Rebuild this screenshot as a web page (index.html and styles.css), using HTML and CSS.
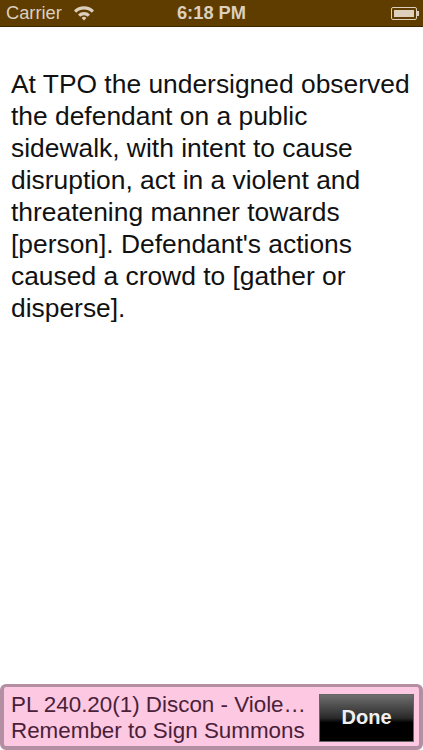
FILE: index.html
```html
<!DOCTYPE html>
<html lang="en">
<head>
  <meta charset="UTF-8">
  <title>Summons Narrative</title>
  <link rel="stylesheet" href="styles.css">
</head>
<body>

<div class="screen">
  <!-- Status bar -->
  <div class="status-bar">
    <div class="status-left">
      <span>Carrier</span>
      <svg class="wifi" width="22" height="16" viewBox="0 0 22 16">
        <path d="M1 5.5 A14 14 0 0 1 21 5.5 L18.8 7.8 A11 11 0 0 0 3.2 7.8 Z" fill="#dcd0bc"/>
        <path d="M5 9.5 A8.5 8.5 0 0 1 17 9.5 L14.8 11.7 A5.5 5.5 0 0 0 7.2 11.7 Z" fill="#dcd0bc"/>
        <path d="M8.6 13 A3.4 3.4 0 0 1 13.4 13 L11 15.6 Z" fill="#dcd0bc"/>
      </svg>
    </div>
    <div class="status-time">6:18 PM</div>
    <div class="battery">
      <div class="battery-body"><div class="battery-fill"></div></div>
      <div class="battery-tip"></div>
    </div>
  </div>

  <!-- Narrative -->
  <div class="content">
    <p>At TPO the undersigned observed the defendant on a public sidewalk, with intent to cause disruption, act in a violent and threatening manner towards [person]. Defendant's actions caused a crowd to [gather or disperse].</p>
  </div>

  <!-- Bottom bar -->
  <div class="footer">
    <div class="footer-text">
      <div class="footer-line">PL 240.20(1) Discon - Viole…</div>
      <div class="footer-line">Remember to Sign Summons</div>
    </div>
    <button class="done-btn">Done</button>
  </div>
</div>

</body>
</html>
```

FILE: styles.css
```css
* {
  box-sizing: border-box;
}

body {
  margin: 0;
  background: #fff;
  font-family: "Liberation Sans", Arial, sans-serif;
}

.screen {
  display: flex;
  flex-direction: column;
  width: 423px;
  height: 750px;
  overflow: hidden;
}

.status-bar {
  display: grid;
  grid-template-columns: 1fr auto 1fr;
  align-items: center;
  height: 27px;
  padding: 0 4px;
  background: #5f3c00;
  border-bottom: 1px solid #3f2800;
  color: #dcd0bc;
  font-size: 18.3px;
}

.status-left {
  display: flex;
  align-items: center;
  gap: 11px;
  padding-left: 2px;
}

.status-time {
  font-weight: bold;
  font-size: 18.3px;
}

.battery {
  display: flex;
  align-items: center;
  justify-self: end;
}

.battery-body {
  width: 26px;
  height: 13px;
  padding: 2px;
  border: 1px solid #dcd0bc;
  border-radius: 2px;
}

.battery-fill {
  height: 100%;
  background: #dcd0bc;
}

.battery-tip {
  width: 2px;
  height: 5px;
  background: #dcd0bc;
}

.content {
  flex: 1;
  padding: 41px 11px 0;
}

.content p {
  margin: 0;
  color: #111;
  font-size: 26.4px;
  line-height: 32px;
}

.footer {
  display: flex;
  align-items: center;
  justify-content: space-between;
  height: 66px;
  padding: 6px 5px 4px 7px;
  background: #fdc8e1;
  border: 4px solid #b48fa3;
  border-top-width: 3px;
  border-radius: 6px;
}

.footer-text {
  color: #4a1f3a;
  font-size: 22.4px;
  line-height: 26px;
}

.footer-line {
  white-space: nowrap;
}

.done-btn {
  flex: none;
  width: 95px;
  height: 48px;
  border: 1px solid #666;
  background: linear-gradient(#6e6e6e, #2a2a2a 50%, #000 60%);
  color: #f0f0f0;
  font-family: inherit;
  font-size: 20px;
  font-weight: bold;
}
```
